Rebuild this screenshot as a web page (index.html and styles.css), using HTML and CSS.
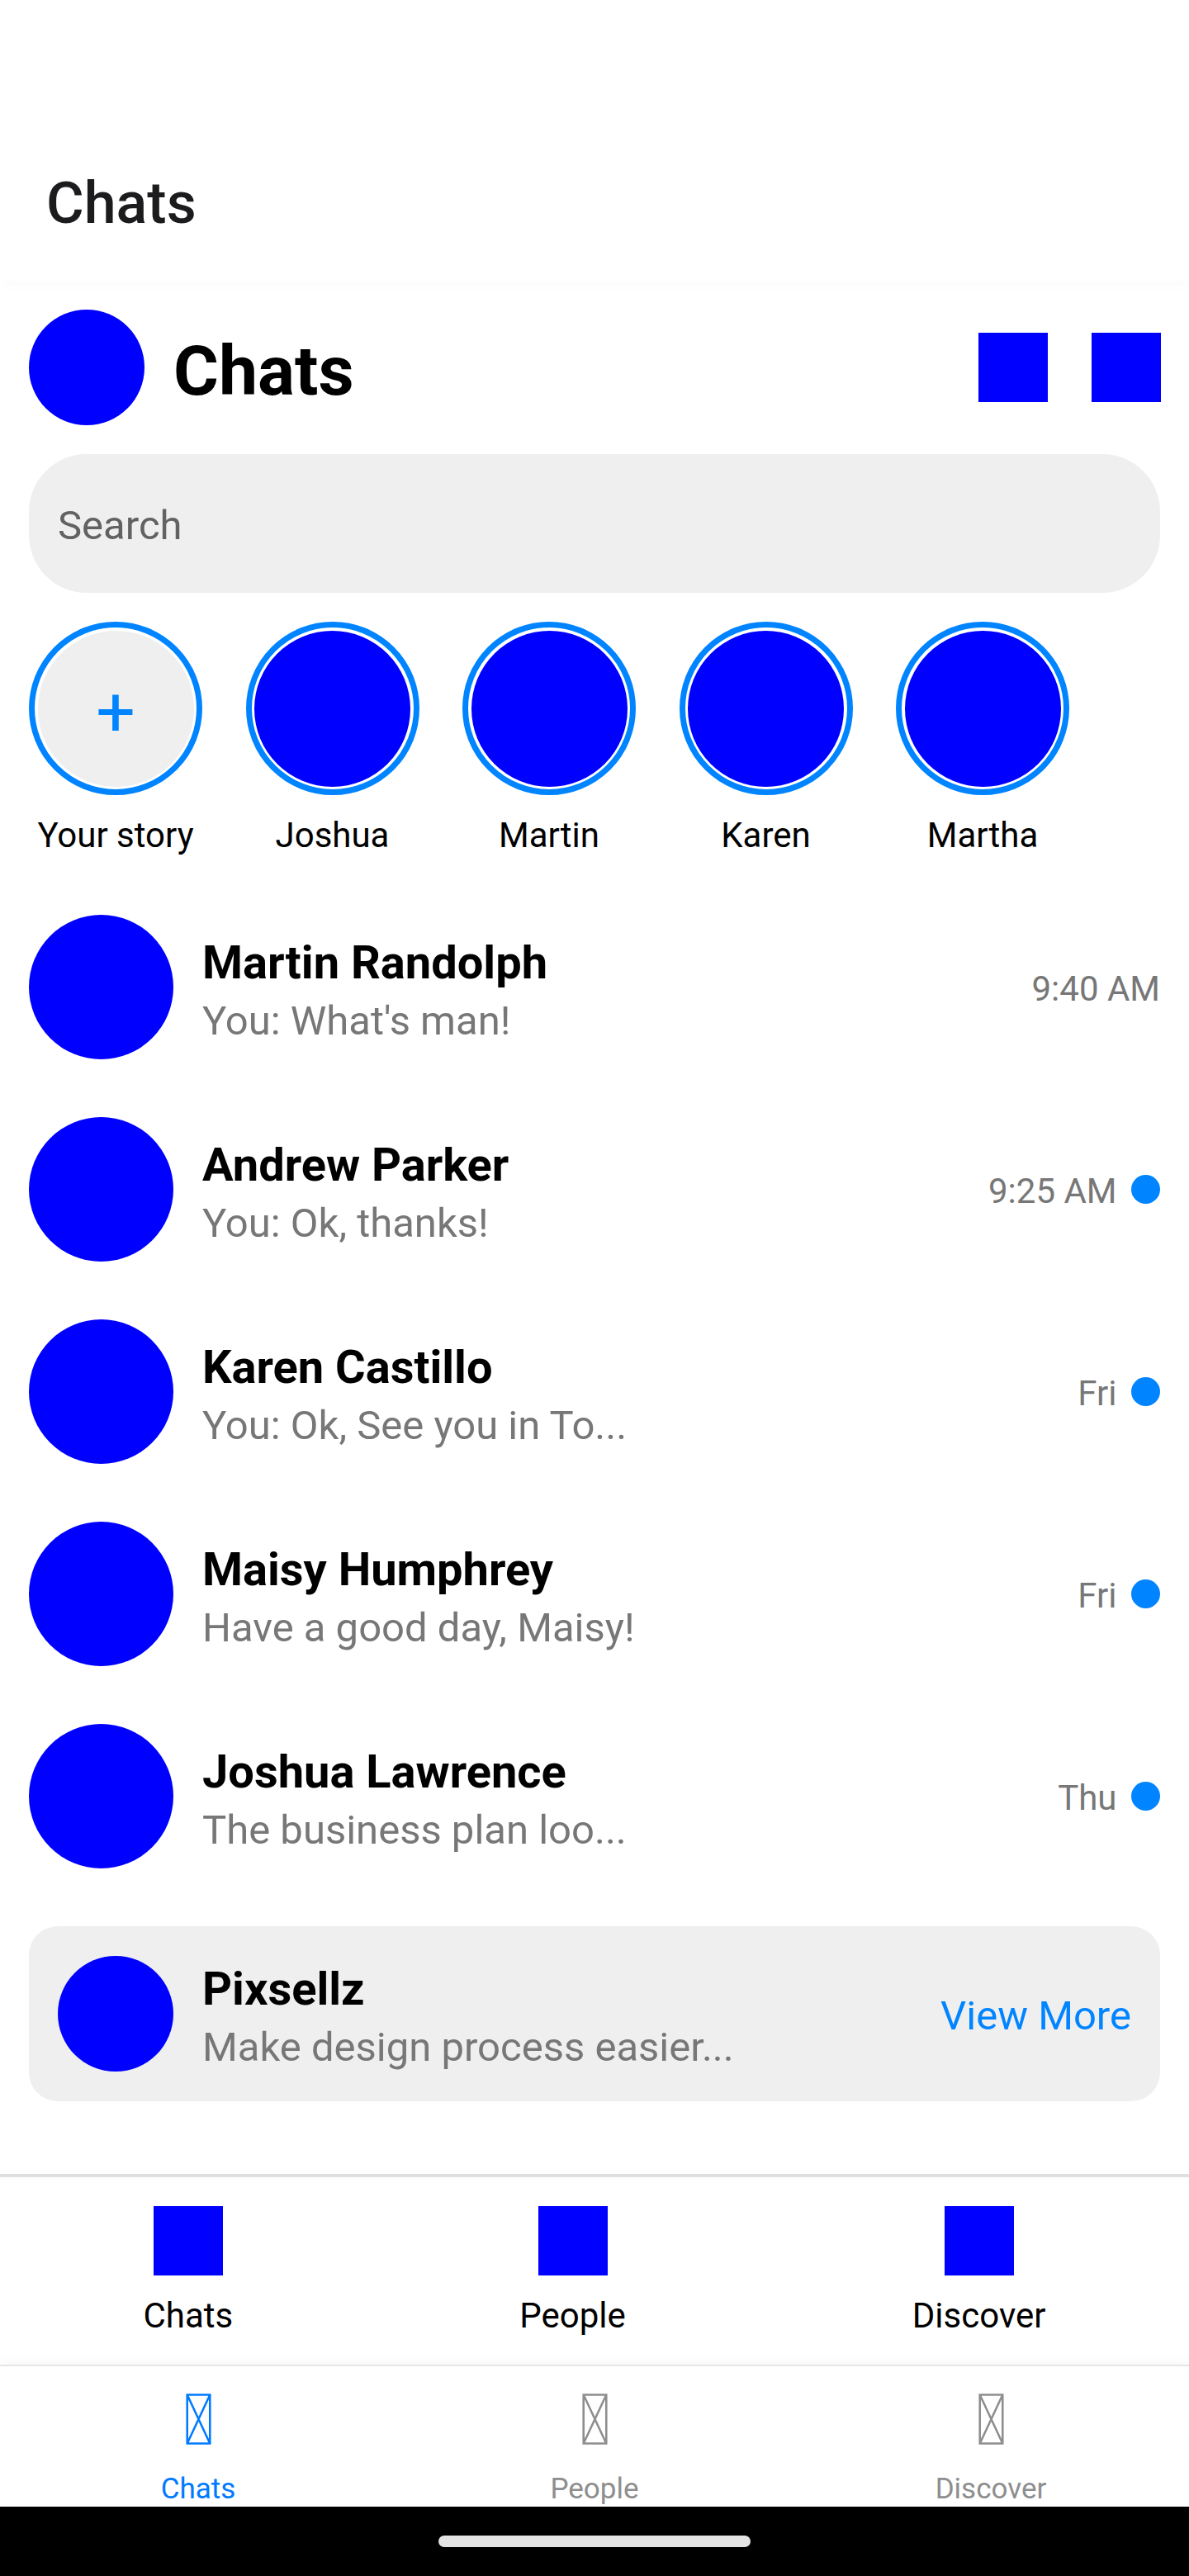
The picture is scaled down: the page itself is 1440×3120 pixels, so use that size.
FILE: index.html
```html
<!DOCTYPE html>
<html lang="en">
<head>
<meta charset="utf-8">
<title>Chats</title>
<link rel="stylesheet" href="styles.css">
</head>
<body>
<div class="screen">
  <header class="navbar"><span class="navbar-title">Chats</span></header>
  <main class="content">
    <div class="top">
      <div class="avatar small"></div>
      <h1 class="title">Chats</h1>
      <div class="actions"><div class="icon"></div><div class="icon"></div></div>
    </div>
    <div class="search">Search</div>
    <div class="stories">
      <div class="story"><div class="ring"><div class="disc add">+</div></div><span class="caption">Your story</span></div>
      <div class="story"><div class="ring"><div class="disc"></div></div><span class="caption">Joshua</span></div>
      <div class="story"><div class="ring"><div class="disc"></div></div><span class="caption">Martin</span></div>
      <div class="story"><div class="ring"><div class="disc"></div></div><span class="caption">Karen</span></div>
      <div class="story"><div class="ring"><div class="disc"></div></div><span class="caption">Martha</span></div>
    </div>
    <div class="chats">
      <div class="chat"><div class="avatar"></div><div class="info"><div class="name">Martin Randolph</div><div class="message">You: What's man!</div></div><span class="caption time">9:40 AM</span></div>
      <div class="chat"><div class="avatar"></div><div class="info"><div class="name">Andrew Parker</div><div class="message">You: Ok, thanks!</div></div><span class="caption time">9:25 AM</span><span class="dot"></span></div>
      <div class="chat"><div class="avatar"></div><div class="info"><div class="name">Karen Castillo</div><div class="message">You: Ok, See you in To...</div></div><span class="caption time">Fri</span><span class="dot"></span></div>
      <div class="chat"><div class="avatar"></div><div class="info"><div class="name">Maisy Humphrey</div><div class="message">Have a good day, Maisy!</div></div><span class="caption time">Fri</span><span class="dot"></span></div>
      <div class="chat"><div class="avatar"></div><div class="info"><div class="name">Joshua Lawrence</div><div class="message">The business plan loo...</div></div><span class="caption time">Thu</span><span class="dot"></span></div>
    </div>
    <div class="promo">
      <div class="avatar small"></div>
      <div class="info"><div class="name">Pixsellz</div><div class="message">Make design process easier...</div></div>
      <span class="message more">View More</span>
    </div>
  </main>
  <nav class="footer">
    <div class="footer-item"><div class="icon"></div><span class="caption">Chats</span></div>
    <div class="footer-item"><div class="icon"></div><span class="caption">People</span></div>
    <div class="footer-item"><div class="icon"></div><span class="caption">Discover</span></div>
  </nav>
  <nav class="tabs">
    <div class="tab active"><svg class="glyph" viewBox="0 0 31 63"><path d="M1.5 1.5H29.5V61.5H1.5ZL29.5 61.5M29.5 1.5L1.5 61.5"/></svg><span>Chats</span></div>
    <div class="tab"><svg class="glyph" viewBox="0 0 31 63"><path d="M1.5 1.5H29.5V61.5H1.5ZL29.5 61.5M29.5 1.5L1.5 61.5"/></svg><span>People</span></div>
    <div class="tab"><svg class="glyph" viewBox="0 0 31 63"><path d="M1.5 1.5H29.5V61.5H1.5ZL29.5 61.5M29.5 1.5L1.5 61.5"/></svg><span>Discover</span></div>
  </nav>
  <div class="system"><div class="handle"></div></div>
</div>
</body>
</html>
```
FILE: styles.css
```css
* { box-sizing: border-box; }
body { margin: 0; background: #fff; color: #000; font-family: Roboto, sans-serif; }
.screen { width: 1440px; height: 3120px; display: flex; flex-direction: column; overflow: hidden; background: #fff; }

.navbar { height: 340px; flex: none; padding: 204px 56px 0; background: #fff; box-shadow: 0 4px 16px rgba(0, 0, 0, .025); }
.navbar-title { display: block; font-size: 70px; line-height: 84px; font-weight: 500; color: #1c1c1e; }

.content { height: 2293px; flex: none; padding: 35px 35px 0; }
.top { display: flex; align-items: center; height: 140px; }
.avatar { width: 175px; height: 175px; flex: none; border-radius: 50%; background: #00f; }
.avatar.small { width: 140px; height: 140px; }
.title { flex: 1; margin: 0 0 0 35px; padding-top: 10px; font-size: 84px; line-height: 100px; font-weight: 700; }
.actions { display: flex; gap: 53px; margin-right: -1px; }
.icon { width: 84px; height: 84px; flex: none; background: #00f; }

.search { height: 168px; margin-top: 35px; padding: 5px 35px 0; border-radius: 70px; background: #efefef; font-size: 49px; line-height: 164px; color: #626262; }

.stories { display: flex; gap: 52.5px; margin-top: 35px; }
.story { width: 210px; display: flex; flex-direction: column; align-items: center; gap: 17.5px; }
.ring { width: 210px; height: 210px; padding: 3.5px; border: 7px solid #0084ff; border-radius: 50%; }
.disc { width: 189px; height: 189px; border-radius: 50%; background: #00f; }
.disc.add { padding-top: 6px; background: #efefef; color: #0084ff; font-size: 84px; line-height: 185px; text-align: center; }
.caption { height: 57px; padding-top: 4px; font-size: 42px; line-height: 54px; white-space: nowrap; }

.chats { display: flex; flex-direction: column; gap: 70px; margin-top: 70px; }
.chat { display: flex; align-items: center; height: 175px; }
.info { flex: 1; margin-left: 35px; }
.chat .info { padding-top: 1px; }
.name { height: 76px; padding-top: 6px; font-size: 56px; line-height: 70px; font-weight: 700; }
.message { height: 66px; padding-top: 5px; font-size: 49px; line-height: 61px; color: #777; }
.time { color: #777; }
.dot { width: 35px; height: 35px; margin-left: 17.5px; border-radius: 50%; background: #0084ff; }

.promo { display: flex; align-items: center; height: 212px; margin-top: 70px; padding: 0 35px; border-radius: 35px; background: #efefef; }
.more { color: #0084ff; }

.footer { height: 231px; flex: none; display: flex; justify-content: space-around; padding-top: 35px; border-top: 4px solid #e0e0e0; background: #fff; }
.footer-item { display: flex; flex-direction: column; align-items: center; gap: 18px; }

.tabs { height: 172px; flex: none; display: flex; border-top: 2px solid #e6e6e6; background: #fff; box-shadow: 0 -2px 14px rgba(0, 0, 0, .04); }
.tab { flex: 1; display: flex; flex-direction: column; align-items: center; padding-top: 33px; gap: 33px; color: #8e8e8f; font-size: 35px; line-height: 42px; }
.tab.active { color: #007aff; }
.glyph { display: block; width: 31px; height: 63px; fill: none; stroke: currentColor; stroke-width: 2.6; }

.system { z-index: 1; height: 84px; flex: none; display: flex; align-items: center; justify-content: center; background: #000; }
.handle { width: 378px; height: 14px; border-radius: 7px; background: #e4e4e4; }
```
